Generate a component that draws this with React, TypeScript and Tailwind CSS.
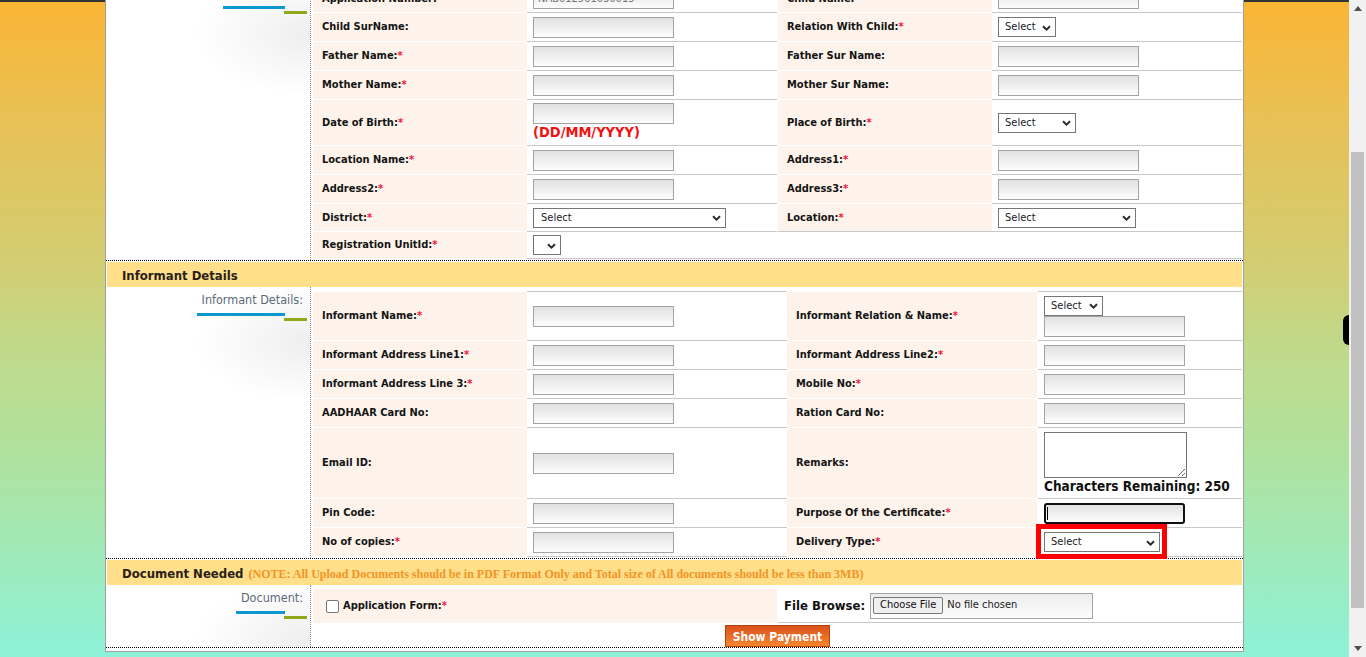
import React from 'react';

const Star = () => <span className="text-[#f2123c]">*</span>;

function Chevron() {
  return (
    <svg width="9" height="6" viewBox="0 0 9 6" className="shrink-0">
      <path d="M1 1.2 4.5 4.6 8 1.2" fill="none" stroke="#2b2b2b" strokeWidth="2" />
    </svg>
  );
}

function Select({ className = '', label = 'Select' }: { className?: string; label?: string }) {
  return (
    <div
      className={`flex h-[20px] items-center justify-between border border-[#767676] bg-white pl-[6px] pr-[4px] pt-px text-[11px] font-normal text-[#222] ${className}`}
    >
      <span>{label}</span>
      <Chevron />
    </div>
  );
}

function TextBox({ value = '' }: { value?: string }) {
  return (
    <input
      readOnly
      value={value}
      className="h-[21px] w-[141px] border border-[#a3a3a3] bg-[linear-gradient(to_bottom,#e1e1e1,#fdfdfd)] px-[4px] text-[11px] text-[#777] outline-none"
    />
  );
}

// peach label cell, line on top like the old table borders
function Lbl({ children, className = '' }: { children?: React.ReactNode; className?: string }) {
  return (
    <div className={`flex shrink-0 items-center border-t border-white bg-[#fdf3ea] pl-[9px] pt-px text-[11px] font-bold text-[#141414] ${className}`}>
      {children}
    </div>
  );
}

// white field cell
function Fld({ children, className = '' }: { children?: React.ReactNode; className?: string }) {
  return (
    <div className={`flex shrink-0 items-center border-t border-[#c8c8c8] pl-[6px] ${className}`}>
      {children}
    </div>
  );
}

function SideLabel({ text }: { text: string }) {
  return (
    <div className="flex justify-end pr-[3px] pt-[6px]">
      <div className="flex flex-col">
        <span className="pl-[5px] pr-[4px] text-right text-[12.5px] leading-[14px] text-[#5d6a78]">{text}</span>
        <div className="mr-[22px] mt-[6px] h-[3px] bg-[#0a98cf]" />
        <div className="mt-[2px] h-[3px] w-[23px] self-end bg-[#8fa81c]" />
      </div>
    </div>
  );
}

const sideCell =
  'w-[205px] shrink-0 border-r border-dotted border-[#8a8a8a] bg-[radial-gradient(115px_60px_at_100%_55px,#eeeeee,#ffffff)] bg-no-repeat';

function Header({ children }: { children: React.ReactNode }) {
  return (
    <div className="mx-[1px] mt-[1px] flex h-[25px] items-center bg-[#ffdf89] pl-[15px] pt-[2px] text-[13px] font-bold text-[#2a1e1a]">
      {children}
    </div>
  );
}

function ChildSection() {
  return (
    <section className="-mt-[20px] flex border-b border-dotted border-black">
      <div className={sideCell}>
        <SideLabel text="Child Details:" />
      </div>
      <div className="pb-[1px] pl-[2px] pt-[4px]">
        <div className="flex h-[28px]">
          <Lbl className="w-[214px]">Application Number:</Lbl>
          <Fld className="w-[250px]"><TextBox value="NAB012501030015" /></Fld>
          <Lbl className="ml-[1px] w-[214px]">Child Name:</Lbl>
          <Fld className="w-[250px]"><TextBox /></Fld>
        </div>
        <div className="flex h-[29px]">
          <Lbl className="w-[214px]">Child SurName:</Lbl>
          <Fld className="w-[250px]"><TextBox /></Fld>
          <Lbl className="ml-[1px] w-[214px]">Relation With Child:<Star /></Lbl>
          <Fld className="w-[250px]"><Select className="w-[58px]" /></Fld>
        </div>
        <div className="flex h-[29px]">
          <Lbl className="w-[214px]">Father Name:<Star /></Lbl>
          <Fld className="w-[250px]"><TextBox /></Fld>
          <Lbl className="ml-[1px] w-[214px]">Father Sur Name:</Lbl>
          <Fld className="w-[250px]"><TextBox /></Fld>
        </div>
        <div className="flex h-[29px]">
          <Lbl className="w-[214px]">Mother Name:<Star /></Lbl>
          <Fld className="w-[250px]"><TextBox /></Fld>
          <Lbl className="ml-[1px] w-[214px]">Mother Sur Name:</Lbl>
          <Fld className="w-[250px]"><TextBox /></Fld>
        </div>
        <div className="flex h-[46px]">
          <Lbl className="w-[214px]">Date of Birth:<Star /></Lbl>
          <Fld className="w-[250px] flex-col !items-start justify-start pt-[3px]">
            <TextBox />
            <span className="text-[14.5px] font-bold leading-[17px] text-[#f21010]">(DD/MM/YYYY)</span>
          </Fld>
          <Lbl className="ml-[1px] w-[214px]">Place of Birth:<Star /></Lbl>
          <Fld className="w-[250px]"><Select className="w-[78px]" /></Fld>
        </div>
        <div className="flex h-[29px]">
          <Lbl className="w-[214px]">Location Name:<Star /></Lbl>
          <Fld className="w-[250px]"><TextBox /></Fld>
          <Lbl className="ml-[1px] w-[214px]">Address1:<Star /></Lbl>
          <Fld className="w-[250px]"><TextBox /></Fld>
        </div>
        <div className="flex h-[29px]">
          <Lbl className="w-[214px]">Address2:<Star /></Lbl>
          <Fld className="w-[250px]"><TextBox /></Fld>
          <Lbl className="ml-[1px] w-[214px]">Address3:<Star /></Lbl>
          <Fld className="w-[250px]"><TextBox /></Fld>
        </div>
        <div className="flex h-[28px]">
          <Lbl className="w-[214px]">District:<Star /></Lbl>
          <Fld className="w-[250px]"><Select className="w-[193px] !pl-[7px]" /></Fld>
          <Lbl className="ml-[1px] w-[214px]">Location:<Star /></Lbl>
          <Fld className="w-[250px]"><Select className="w-[138px]" /></Fld>
        </div>
        <div className="flex h-[27px]">
          <Lbl className="w-[214px]">Registration UnitId:<Star /></Lbl>
          <Fld className="w-[250px]"><Select className="w-[28px]" label="" /></Fld>
          <Fld className="ml-[1px] w-[214px]" />
          <Fld className="w-[250px]" />
        </div>
        <div className="flex h-px">
          <div className="w-[214px] bg-white" />
          <div className="w-[715px] bg-[#c8c8c8]" />
        </div>
      </div>
    </section>
  );
}

function InformantSection() {
  return (
    <section className="flex border-b border-dotted border-black">
      <div className={sideCell}>
        <SideLabel text="Informant Details:" />
      </div>
      <div className="pb-[1px] pl-[2px] pt-[4px]">
        <div className="flex h-[49px]">
          <Lbl className="w-[214px]">Informant Name:<Star /></Lbl>
          <Fld className="w-[260px]"><TextBox /></Fld>
          <Lbl className="w-[250px]">Informant Relation &amp; Name:<Star /></Lbl>
          <Fld className="ml-[1px] w-[204px] flex-col !items-start justify-center">
            <Select className="w-[59px]" />
            <TextBox />
          </Fld>
        </div>
        <div className="flex h-[29px]">
          <Lbl className="w-[214px]">Informant Address Line1:<Star /></Lbl>
          <Fld className="w-[260px]"><TextBox /></Fld>
          <Lbl className="w-[250px]">Informant Address Line2:<Star /></Lbl>
          <Fld className="ml-[1px] w-[204px]"><TextBox /></Fld>
        </div>
        <div className="flex h-[29px]">
          <Lbl className="w-[214px]">Informant Address Line 3:<Star /></Lbl>
          <Fld className="w-[260px]"><TextBox /></Fld>
          <Lbl className="w-[250px]">Mobile No:<Star /></Lbl>
          <Fld className="ml-[1px] w-[204px]"><TextBox /></Fld>
        </div>
        <div className="flex h-[29px]">
          <Lbl className="w-[214px]">AADHAAR Card No:</Lbl>
          <Fld className="w-[260px]"><TextBox /></Fld>
          <Lbl className="w-[250px]">Ration Card No:</Lbl>
          <Fld className="ml-[1px] w-[204px]"><TextBox /></Fld>
        </div>
        <div className="flex h-[71px]">
          <Lbl className="w-[214px]">Email ID:</Lbl>
          <Fld className="w-[260px]"><TextBox /></Fld>
          <Lbl className="w-[250px]">Remarks:</Lbl>
          <Fld className="ml-[1px] w-[204px] flex-col !items-start justify-center">
            <textarea readOnly className="h-[46px] w-[143px] border border-[#767676] bg-white outline-none" />
            <span className="text-[13.5px] font-bold leading-[16px] text-[#111]">Characters Remaining: 250</span>
          </Fld>
        </div>
        <div className="flex h-[29px]">
          <Lbl className="w-[214px]">Pin Code:</Lbl>
          <Fld className="w-[260px]"><TextBox /></Fld>
          <Lbl className="w-[250px]">Purpose Of the Certificate:<Star /></Lbl>
          <Fld className="ml-[1px] w-[204px]">
            <div className="flex h-[21px] w-[141px] items-center rounded-[3px] border-2 border-[#101010] bg-[linear-gradient(to_bottom,#e1e1e1,#fdfdfd)] pl-[1px]">
              <span className="h-[13px] w-px bg-black" />
            </div>
          </Fld>
        </div>
        <div className="flex h-[29px]">
          <Lbl className="w-[214px]">No of copies:<Star /></Lbl>
          <Fld className="w-[260px]"><TextBox /></Fld>
          <Lbl className="w-[250px]">Delivery Type:<Star /></Lbl>
          <Fld className="ml-[1px] w-[204px]">
            <div className="relative">
              <Select className="w-[116px]" />
              <div className="pointer-events-none absolute -bottom-[7px] -left-[8px] -right-[7px] -top-[8px] border-[5px] border-[#ff0000]" />
            </div>
          </Fld>
        </div>
        <div className="flex h-px">
          <div className="w-[214px] bg-white" />
          <div className="w-[260px] bg-[#c8c8c8]" />
          <div className="w-[250px] bg-white" />
          <div className="ml-[1px] w-[204px] bg-[#c8c8c8]" />
        </div>
      </div>
    </section>
  );
}

function DocumentSection() {
  return (
    <section className="flex border-b border-dotted border-black">
      <div className={sideCell}>
        <SideLabel text="Document:" />
      </div>
      <div className="pl-[2px] pt-[3px]">
        <div className="flex h-[35px]">
          <div className="flex w-[464px] items-center border-t border-white bg-[#fdf3ea] pl-[13px] pt-[1px] text-[11px] font-bold text-[#141414]">
            <div className="h-[13px] w-[13px] rounded-[2px] border border-[#767676] bg-white" />
            <span className="ml-[4px]">Application Form:<Star /></span>
          </div>
          <div className="ml-[1px] flex w-[464px] items-center border-b border-[#c8c8c8] pl-[6px] pt-[1px]">
            <span className="text-[13px] font-bold text-[#111]">File Browse:</span>
            <div className="ml-[5px] flex h-[26px] w-[223px] items-center border border-[#a3a3a3] bg-[linear-gradient(to_bottom,#ececec,#fdfdfd)] pl-[2px]">
              <div className="flex h-[17px] items-center rounded-[2px] border border-[#767676] bg-[#efefef] px-[6px] text-[11px] text-[#111]">
                Choose File
              </div>
              <span className="ml-[4px] text-[11px] text-[#222]">No file chosen</span>
            </div>
          </div>
        </div>
        <div className="mt-[2px] flex justify-center">
          <button className="h-[22px] w-[105px] border border-[#b5420f] bg-[linear-gradient(to_bottom,#d9521d,#f5862f)] pt-[1px] text-[12px] font-bold text-white">
            Show Payment
          </button>
        </div>
      </div>
    </section>
  );
}

function Scrollbar() {
  return (
    <div className="flex w-[17px] shrink-0 flex-col bg-[#f1f1f1]">
      <div className="flex h-[17px] items-center justify-center">
        <svg width="8" height="5" viewBox="0 0 8 5">
          <polygon points="0,5 4,0 8,5" fill="#505050" />
        </svg>
      </div>
      <div className="mx-[2px] mt-[135px] h-[456px] bg-[#c1c1c1]" />
      <div className="flex-1" />
      <div className="flex h-[17px] items-center justify-center">
        <svg width="8" height="5" viewBox="0 0 8 5">
          <polygon points="0,0 8,0 4,5" fill="#505050" />
        </svg>
      </div>
    </div>
  );
}

export default function App() {
  return (
    <div className="flex h-[657px] w-full overflow-hidden font-['DejaVu_Sans_Condensed','DejaVu_Sans',sans-serif]">
      <main className="relative flex-1 bg-[linear-gradient(to_bottom,#333_0px,#333_2px,#fab535_2px,#e5c25a_21%,#d3cd72_40%,#c0d98a_53%,#b0e19c_68%,#a0e9b8_84%,#8df2d8_100%)]">
        <div className="mx-auto w-[1139px] border-x border-b border-[#a0a0a0] bg-white pb-[3px]">
          <ChildSection />
          <Header>Informant Details</Header>
          <InformantSection />
          <Header>
            Document Needed
            <span className="ml-[5px] font-['Liberation_Serif',serif] text-[12px] font-bold text-[#f39427]">
              (NOTE: All Upload Documents should be in PDF Format Only and Total size of All documents should be less than 3MB)
            </span>
          </Header>
          <DocumentSection />
        </div>
        <div className="absolute right-0 top-[315px] h-[30px] w-[6px] rounded-l-[6px] bg-black" />
      </main>
      <Scrollbar />
    </div>
  );
}
